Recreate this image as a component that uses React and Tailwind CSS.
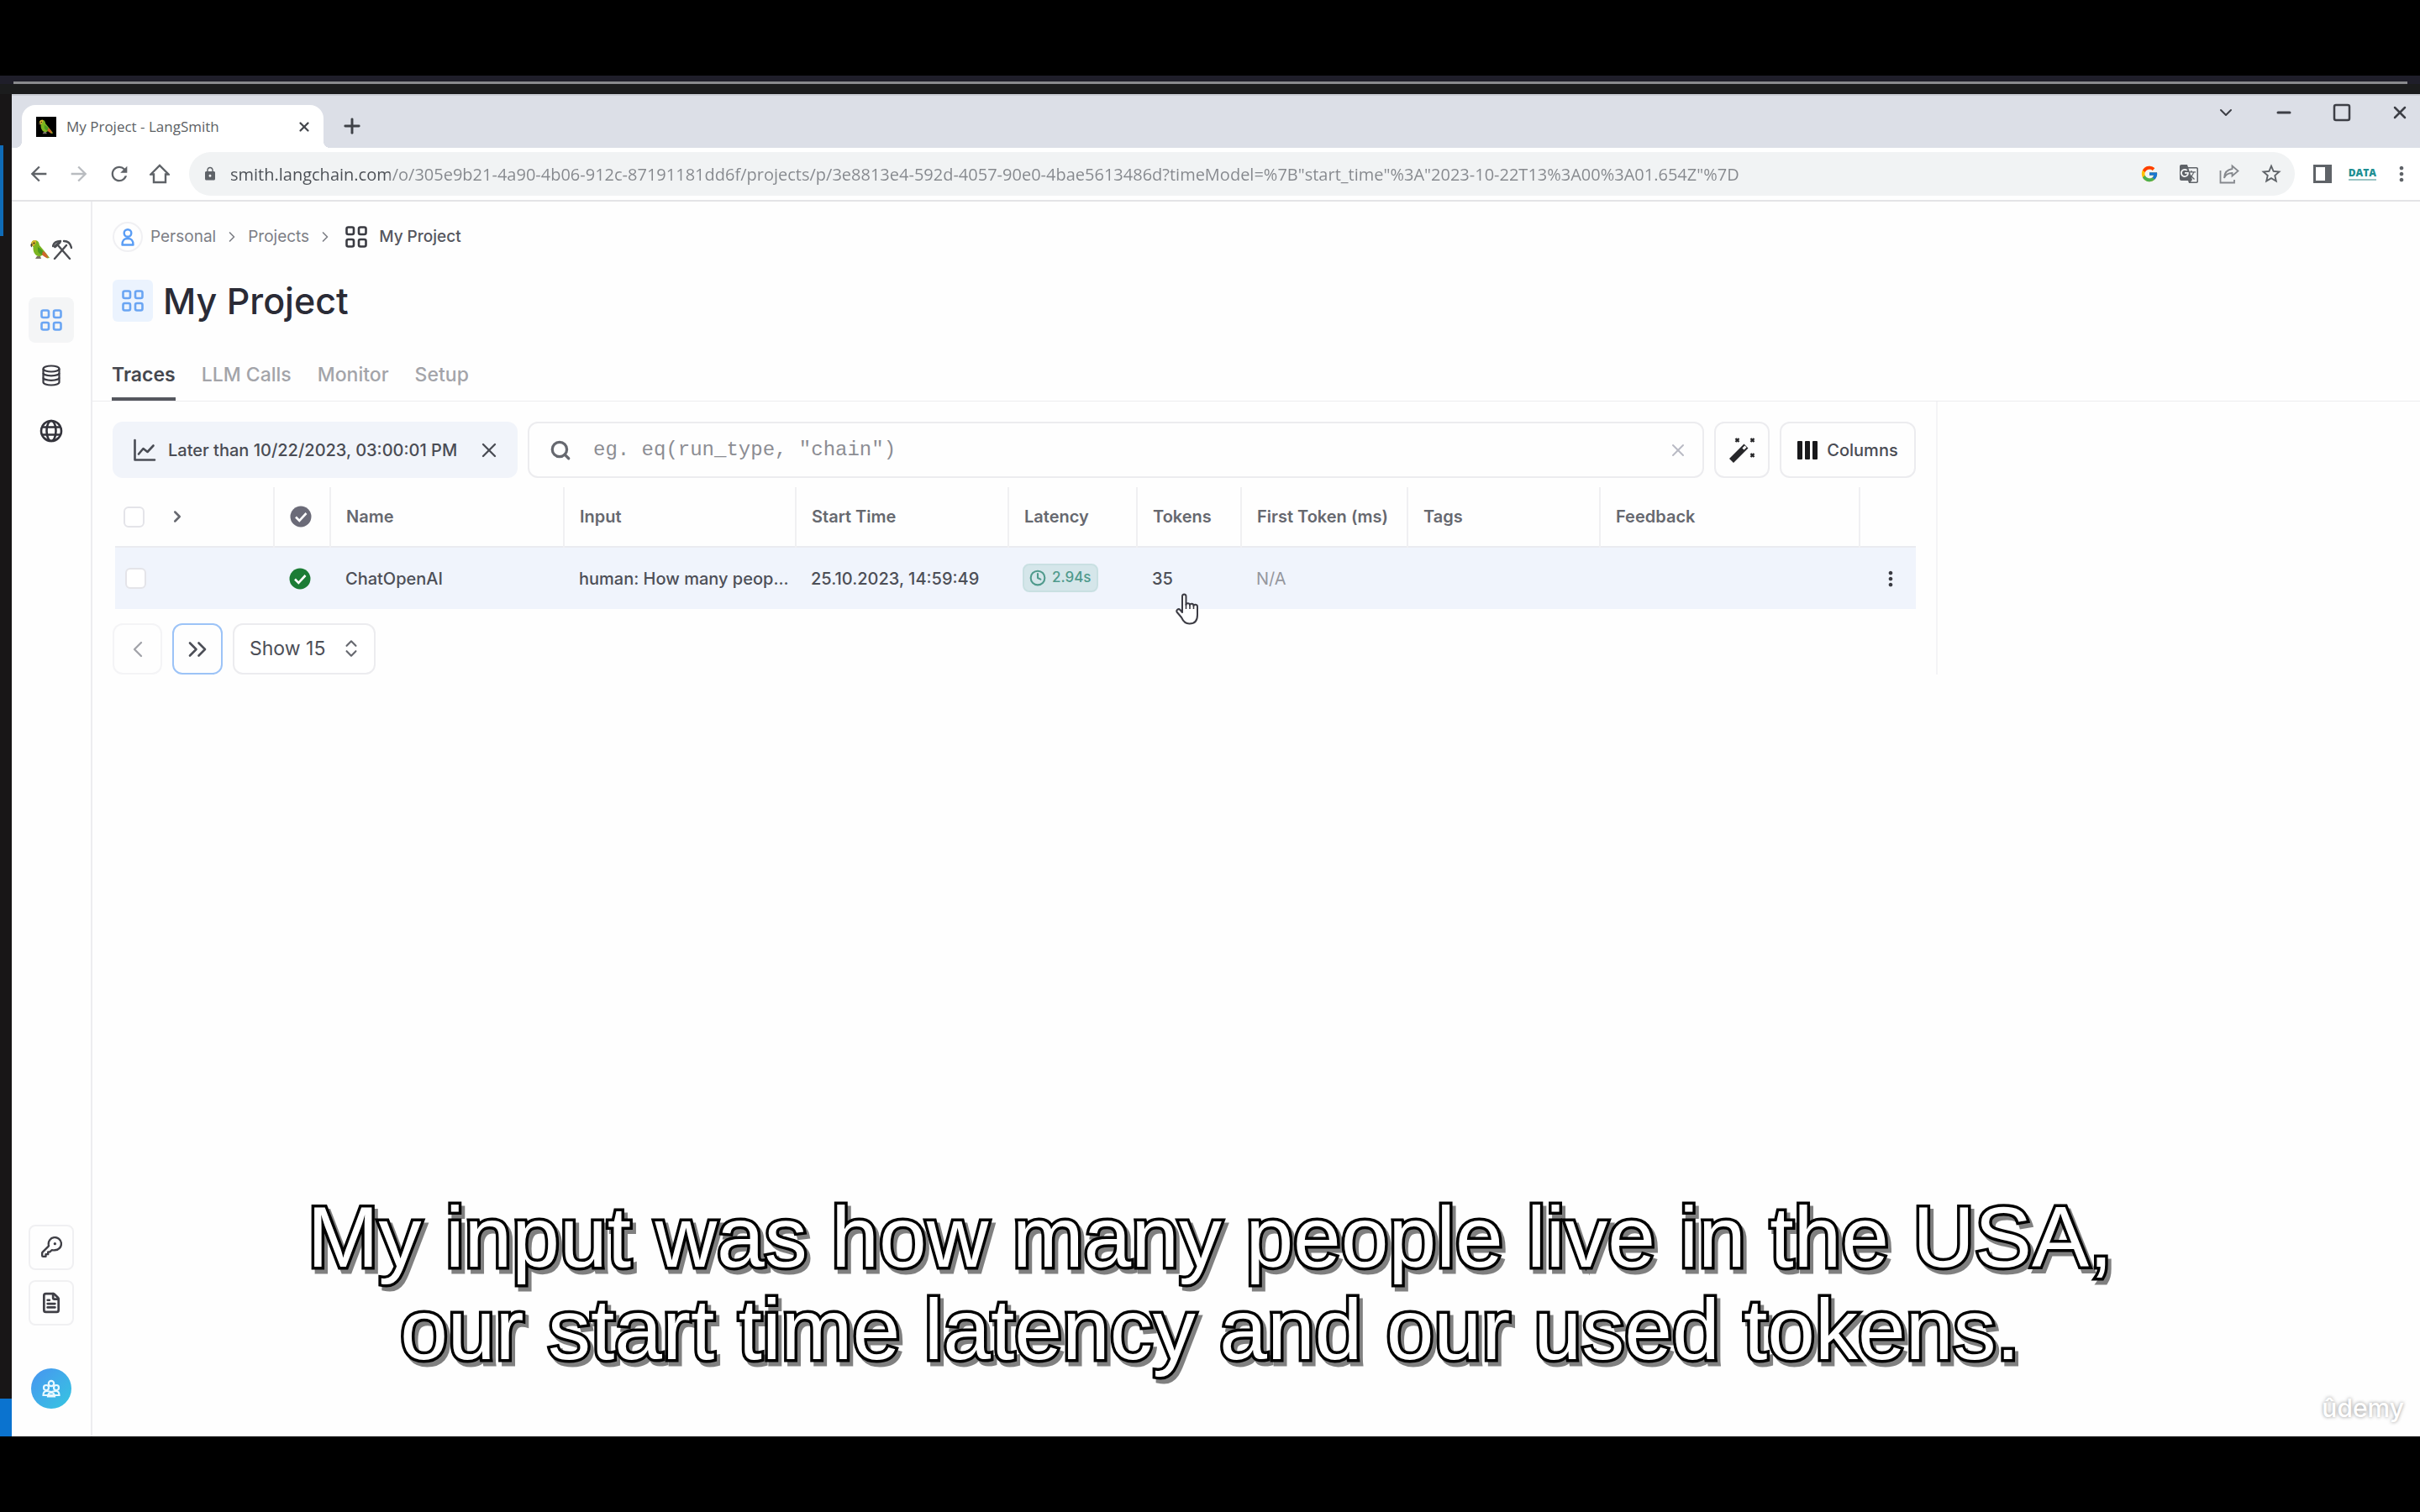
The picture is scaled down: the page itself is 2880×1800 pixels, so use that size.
import { ChevronDown, ChevronLeft, ChevronRight, ChevronsRight, ChevronsUpDown, Clock, FileText, Minus, Plus, Search, Square, X } from "lucide-react";
import { MdArrowBack, MdArrowForward, MdGTranslate, MdLock, MdMoreVert, MdRefresh, MdStarBorder } from "react-icons/md";
import { FcGoogle } from "react-icons/fc";

const URL_TEXT =
  'smith.langchain.com/o/305e9b21-4a90-4b06-912c-87191181dd6f/projects/p/3e8813e4-592d-4057-90e0-4bae5613486d?timeModel=%7B"start_time"%3A"2023-10-22T13%3A00%3A01.654Z"%7D';

/* ---------- drawings ---------- */

function Parrot({ className }) {
  return (
    <svg viewBox="0 0 24 24" className={className} aria-hidden="true">
      <path d="M1 6C1 2.5 3.500.5 6.500 1S10.500 4 11 7l5 6 4 5 3 4-3 .5-5-4-4 2C6 20 3 15 3.500 9z" fill="#7cb51f" />
      <path d="M1 6C1 2.500 3.500.5 6.500 1 8 3 6 7 3.500 8 2 8 1 7.500 1 6z" fill="#d9b32c" />
      <path d="M1 5c-1 1.500-.5 3.500.5 4.500C2.500 8 2.500 6.500 2.500 5z" fill="#4a4038" />
      <circle cx="4.500" cy="4.500" r="1" fill="#26301a" />
      <path d="M9 9c4 2 7 5 9 10-4 0-8-2-9-5z" fill="#4c9a1f" />
      <path d="M15 14c3 1 5 4 6.500 8-3 0-6-2-7.500-4z" fill="#d0652c" />
      <path d="M8 20l-2 3h7l-1-3z" fill="#7b7468" />
    </svg>
  );
}

function HammerPick({ className }) {
  return (
    <svg viewBox="0 0 24 24" className={className} fill="none" stroke="#4b4d52" strokeLinecap="round" aria-hidden="true">
      <path d="M7 7l14 16M17 7L3 23" strokeWidth="2.400" />
      <path d="M1 8c1-4 4-6 9-6" strokeWidth="2.400" />
      <path d="M3.500 8.500L9 3.500" strokeWidth="3.400" />
      <path d="M14 2c5 0 8 3 9 8" strokeWidth="2.400" />
    </svg>
  );
}

function Tiles({ className }) {
  return (
    <svg viewBox="0 0 26 26" className={className} fill="none" stroke="currentColor" strokeWidth="2.600" aria-hidden="true">
      <rect x="1.500" y="1.500" width="8.500" height="8.500" rx="2" />
      <rect x="16" y="1.500" width="8.500" height="8.500" rx="2" />
      <rect x="1.500" y="16" width="8.500" height="8.500" rx="2" />
      <rect x="16" y="16" width="8.500" height="8.500" rx="2" />
    </svg>
  );
}

function Home({ className }) {
  return (
    <svg viewBox="0 0 24 24" className={className} fill="none" stroke="currentColor" strokeWidth="2.400" aria-hidden="true">
      <path d="M1.500 12.500L12 2l10.500 10.500H19V22H5v-9.500z" />
    </svg>
  );
}

function Share({ className }) {
  return (
    <svg viewBox="0 0 24 24" className={className} fill="none" stroke="currentColor" strokeWidth="1.800" aria-hidden="true">
      <path d="M1.500 8v14.500H18V19" />
      <path d="M15.500 2.500L22.500 8.500 15.500 14.500V11C10.500 11 7.500 13 6 17c0-6 3.500-10 9.500-11z" />
    </svg>
  );
}

function SidePanel({ className }) {
  return (
    <svg viewBox="0 0 22 22" className={className} aria-hidden="true">
      <rect x="1.500" y="1.500" width="19" height="19" fill="#fff" stroke="#5f6368" strokeWidth="3" />
      <rect x="14" y="1" width="7" height="20" fill="#5f6368" />
    </svg>
  );
}

function Database({ className }) {
  return (
    <svg viewBox="0 0 24 26" className={className} fill="none" stroke="#3a3a42" strokeWidth="2.200" aria-hidden="true">
      <ellipse cx="12" cy="5" rx="9.500" ry="3.500" />
      <path d="M2.500 5v16c0 2 4.300 3.500 9.500 3.500s9.500-1.500 9.500-3.500V5" />
      <path d="M2.500 10c0 2 4.300 3.300 9.500 3.300s9.500-1.300 9.500-3.300M2.500 15.500c0 2 4.300 3.300 9.500 3.300s9.500-1.300 9.500-3.300" />
    </svg>
  );
}

function Globe({ className }) {
  return (
    <svg viewBox="0 0 28 28" className={className} fill="none" stroke="#33333b" strokeWidth="2.600" aria-hidden="true">
      <circle cx="14" cy="14" r="12" />
      <ellipse cx="14" cy="14" rx="5.500" ry="12" />
      <path d="M3.500 9.500h21M3.500 18.500h21" />
    </svg>
  );
}

function Key({ className }) {
  return (
    <svg viewBox="0 0 24 24" className={className} fill="none" stroke="#3f3f46" strokeWidth="2.200" strokeLinecap="round" strokeLinejoin="round" aria-hidden="true">
      <path d="M16 8h.01" strokeWidth="3" />
      <path d="M16 15a7 7 0 1 0-6.900-5.800c.1.500.1.700.1.900 0 .2-.1.300-.2.500-.1.200-.2.300-.5.600l-5.800 5.800c-.3.300-.5.500-.6.700-.1.200-.1.400-.1.700V21c0 .6.400 1 1 1h3v-2.500h2.500V17h2l1.300-1.300c.3-.3.400-.4.600-.5.200-.1.300-.2.500-.2.200 0 .4 0 .9.100.700.1 1.500-.1 2.200-.1z" />
    </svg>
  );
}

function Team({ className }) {
  return (
    <svg viewBox="0 0 24 24" className={className} fill="none" stroke="#e8f8ff" strokeWidth="2.200" aria-hidden="true">
      <circle cx="12" cy="6" r="3.200" />
      <circle cx="6" cy="11" r="3" />
      <circle cx="18" cy="11" r="3" />
      <path d="M2.500 20c0-3 1.500-5 4-5s5 1 5.500 1 3-1 5.500-1 4 2 4 5z" />
      <path d="M8 21.500c0-3 1.500-4.500 4-4.500s4 1.500 4 4.500z" />
    </svg>
  );
}

function Person({ className }) {
  return (
    <svg viewBox="0 0 20 24" className={className} fill="none" stroke="#5a9df5" strokeWidth="2.400" aria-hidden="true">
      <circle cx="10" cy="7.500" r="4.300" />
      <path d="M3.500 21.500c0-5.500 2-7.500 6.500-7.500s6.500 2 6.500 7.500z" strokeLinejoin="round" />
    </svg>
  );
}

function ChartLine({ className }) {
  return (
    <svg viewBox="0 0 28 28" className={className} fill="none" stroke="#4a4d55" strokeWidth="2.600" strokeLinecap="round" strokeLinejoin="round" aria-hidden="true">
      <path d="M2.500 2v23.500H26" />
      <path d="M7 18.500l5.500-6.500 5 4L24.500 8.500" />
    </svg>
  );
}

function Wand({ className }) {
  return (
    <svg viewBox="0 0 32 32" className={className} fill="none" stroke="#27272a" aria-hidden="true">
      <path d="M3.500 28.500L21 11" strokeWidth="7" />
      <path d="M17.500 14.500l3-3" stroke="#fff" strokeWidth="3" />
      <path d="M8.500 2l4 4M12.500 2l-4 4M26.500 2l4 4M30.500 2l-4 4M26.500 20l4 4M30.500 20l-4 4" strokeWidth="2.400" />
    </svg>
  );
}

function Bars({ className }) {
  return (
    <svg viewBox="0 0 24 22" className={className} fill="#18181b" aria-hidden="true">
      <rect x="0" y="0" width="6" height="22" rx="1" />
      <rect x="9" y="0" width="6" height="22" rx="1" />
      <rect x="18" y="0" width="6" height="22" rx="1" />
    </svg>
  );
}

function StatusDot({ className, label }) {
  return (
    <svg viewBox="0 0 26 26" className={className} role="img" aria-label={label}>
      <circle cx="13" cy="13" r="12.500" fill="currentColor" />
      <path d="M7 13.500l4.300 4.300L19.500 9" fill="none" stroke="#fff" strokeWidth="2.600" />
    </svg>
  );
}

function HandCursor({ className }) {
  return (
    <svg viewBox="0 0 28 38" className={className} fill="#fff" stroke="#3c3c44" strokeWidth="2" strokeLinejoin="round" aria-hidden="true">
      <path d="M8 23V4c0-3.500 4.500-3.500 4.500 0v10c0-2.500 4.500-2.500 4.500.5 0-2.500 4.500-2.500 4.500.8 0-2.300 4.500-2 4.500 1V26c0 7-3.500 10.500-9.500 10.500-5 0-7.500-3-9.500-7.500L1.500 22.500C.5 20 3.500 18 5.500 20z" />
      <path d="M12.500 13v6M17 14v5M21.500 15v4" fill="none" strokeWidth="1.600" />
    </svg>
  );
}

/* ---------- browser ---------- */

function TabStrip() {
  return (
    <div className="flex h-16 items-start justify-between border-t-2 border-[#c9ccd4] bg-[#dcdfe7]">
      <div className="flex h-full items-end">
        <div className="relative ml-3 flex h-[51px] w-[359px] items-center rounded-t-2xl bg-white pr-[14px] pl-[17px]">
          <span className="absolute bottom-0 -left-2 size-2 bg-[radial-gradient(circle_at_0_0,#dcdfe7_8px,#fff_8px)]" />
          <span className="absolute -right-2 bottom-0 size-2 bg-[radial-gradient(circle_at_100%_0,#dcdfe7_8px,#fff_8px)]" />
          <span className="flex size-6 items-center justify-center bg-black">
            <Parrot className="size-[18px]" />
          </span>
          <span className="ml-3 flex-1 font-['Open_Sans',sans-serif] text-[17px] text-[#5c5f64]">My Project - LangSmith</span>
          <button type="button" aria-label="Close tab" className="text-[#45484d]">
            <X className="size-[18px]" strokeWidth={3} />
          </button>
        </div>
        <button type="button" aria-label="New tab" className="mb-3 ml-5 text-[#3f4248]">
          <Plus className="size-7" strokeWidth={2.5} />
        </button>
      </div>
      <div className="mr-3 flex items-center gap-[45px] pt-2 text-[#3d3f46]">
        <button type="button" aria-label="Search tabs"><ChevronDown className="size-6" strokeWidth={2} /></button>
        <button type="button" aria-label="Minimize"><Minus className="size-6" strokeWidth={3} /></button>
        <button type="button" aria-label="Maximize"><Square className="size-6" strokeWidth={2.5} /></button>
        <button type="button" aria-label="Close"><X className="size-6" strokeWidth={2.5} /></button>
      </div>
    </div>
  );
}

function Toolbar() {
  return (
    <div className="flex h-16 items-center border-b-2 border-[#e4e4e6] bg-white pr-2 pl-[18px] text-[#5f6368]">
      <div className="flex items-center gap-5">
        <button type="button" aria-label="Back"><MdArrowBack className="size-7" /></button>
        <button type="button" aria-label="Forward" className="text-[#b9bcc0]"><MdArrowForward className="size-7" /></button>
        <button type="button" aria-label="Reload"><MdRefresh className="size-7" /></button>
        <button type="button" aria-label="Home" className="pl-[2px]"><Home className="size-6" /></button>
      </div>
      <div className="ml-[23px] flex h-[52px] flex-1 items-center rounded-full bg-[#f1f3f4] pr-[14px] pl-4">
        <MdLock className="size-[18px]" />
        <input
          aria-label="Address"
          defaultValue={URL_TEXT}
          className="ml-[15px] h-8 flex-1 bg-[linear-gradient(to_right,#4a4e54_190px,#85888d_190px)] bg-clip-text font-['Open_Sans',sans-serif] text-[20px] text-transparent outline-none"
        />
        <div className="flex items-center gap-6">
          <FcGoogle className="size-[22px]" />
          <button type="button" aria-label="Translate"><MdGTranslate className="size-6" /></button>
          <button type="button" aria-label="Share" className="text-[#85888d]"><Share className="size-6" /></button>
          <button type="button" aria-label="Bookmark"><MdStarBorder className="size-7" /></button>
        </div>
      </div>
      <div className="ml-[18px] flex items-center gap-4">
        <button type="button" aria-label="Side panel" className="px-1"><SidePanel className="size-[22px]" /></button>
        <button type="button" className="border-b-2 border-[#9cc4c4] font-['Open_Sans',sans-serif] text-[12px] leading-[14px] font-extrabold text-[#1f8f93]">DATA</button>
        <button type="button" aria-label="Menu"><MdMoreVert className="size-7" /></button>
      </div>
    </div>
  );
}

/* ---------- application ---------- */

function Sidebar() {
  return (
    <aside className="flex w-24 shrink-0 flex-col items-center border-r-2 border-[#ededf0] pt-[45px] pb-[33px]">
      <a href="#home" aria-label="LangSmith" className="mb-[45px] flex gap-[2px]">
        <Parrot className="size-6" />
        <HammerPick className="size-6" />
      </a>
      <nav className="flex flex-col gap-3">
        <a href="#projects" aria-label="Projects" className="flex size-[54px] items-center justify-center rounded-lg bg-[#f4f5f6]">
          <Tiles className="size-[26px] text-[#6aa5f3]" />
        </a>
        <a href="#datasets" aria-label="Datasets" className="flex size-[54px] items-center justify-center">
          <Database className="h-[26px] w-6" />
        </a>
        <a href="#hub" aria-label="Hub" className="flex size-[54px] items-center justify-center">
          <Globe className="size-7" />
        </a>
      </nav>
      <div className="mt-auto flex flex-col gap-3">
        <button type="button" aria-label="API keys" className="flex size-[54px] items-center justify-center rounded-lg border-2 border-[#f0f0f2]">
          <Key className="size-[26px]" />
        </button>
        <button type="button" aria-label="Documentation" className="flex size-[54px] items-center justify-center rounded-lg border-2 border-[#f0f0f2]">
          <FileText className="size-[26px] text-[#3f3f46]" strokeWidth={2.5} />
        </button>
      </div>
      <button type="button" aria-label="Account" className="mt-[51px] flex size-12 items-center justify-center rounded-full bg-gradient-to-br from-[#4794f0] to-[#35c6e0]">
        <Team className="size-6" />
      </button>
    </aside>
  );
}

function Breadcrumb() {
  return (
    <nav aria-label="Breadcrumb" className="flex h-9 items-center text-[19px] text-[#7d7f86]">
      <span className="flex size-9 items-center justify-center rounded-full border-2 border-[#f0f0f3]">
        <Person className="h-6 w-5" />
      </span>
      <a href="#personal" className="ml-[9px]">Personal</a>
      <ChevronRight className="mx-[9px] size-5" strokeWidth={2} />
      <a href="#projects">Projects</a>
      <ChevronRight className="mr-[14px] ml-[9px] size-5" strokeWidth={2} />
      <Tiles className="size-[26px] text-[#3a3b42]" />
      <span className="ml-[14px] font-medium text-[#55575e]">My Project</span>
    </nav>
  );
}

const TABS = ["Traces", "LLM Calls", "Monitor", "Setup"];

function PageTabs() {
  return (
    <div role="tablist" className="mt-9 flex gap-[31px] border-b border-[#ececef] pl-[23px] text-[23px] font-medium">
      {TABS.map((tab, i) => (
        <button
          key={tab}
          type="button"
          role="tab"
          aria-selected={i === 0}
          className={
            i === 0
              ? "h-[57px] border-b-4 border-[#55575e] font-semibold text-[#45474e]"
              : "h-[57px] border-b-4 border-transparent text-[#a3a4a9]"
          }
        >
          {tab}
        </button>
      ))}
    </div>
  );
}

function Filters() {
  return (
    <div className="flex h-[67px] gap-3">
      <div className="flex w-[482px] items-center rounded-xl bg-[#f1f4fa] pr-[20px] pl-6 text-[20px] font-medium text-[#4a4c54]">
        <ChartLine className="size-7" />
        <span className="ml-[14px] flex-1 whitespace-nowrap">Later than 10/22/2023, 03:00:01 PM</span>
        <button type="button" aria-label="Remove time filter"><X className="size-7" strokeWidth={2} /></button>
      </div>
      <div className="flex flex-1 items-center rounded-xl border-2 border-[#ececef] pr-[17px] pl-6">
        <Search className="size-[26px] text-[#66686f]" strokeWidth={3} />
        <input
          type="text"
          aria-label="Filter runs"
          placeholder={'eg. eq(run_type, "chain")'}
          className="ml-[26px] flex-1 font-['Liberation_Mono',monospace] text-[24px] outline-none placeholder:text-[#8c8d93]"
        />
        <button type="button" aria-label="Clear filter" className="text-[#b9bac4]"><X className="size-6" strokeWidth={2} /></button>
      </div>
      <button type="button" aria-label="Suggest filter" className="flex w-[66px] items-center justify-center rounded-xl border-2 border-[#ececef]">
        <Wand className="size-8" />
      </button>
      <button type="button" className="flex w-[162px] items-center justify-center gap-[11px] rounded-xl border-2 border-[#ececef] text-[20px] font-medium text-[#4a4c54]">
        <Bars className="h-[22px] w-6" />
        Columns
      </button>
    </div>
  );
}

function Tick({ label }) {
  return <input type="checkbox" aria-label={label} className="block size-[25px] appearance-none rounded-md border-2 border-[#e4e4e9] bg-white" />;
}

const HEADINGS = ["Name", "Input", "Start Time", "Latency", "Tokens", "First Token (ms)", "Tags", "Feedback"];

function RunsTable() {
  return (
    <table className="mt-[11px] ml-[3px] w-[calc(100%-3px)] table-fixed border-collapse text-left text-[20px] whitespace-nowrap">
      <colgroup>
        <col className="w-[189px]" />
        <col className="w-[67px]" />
        <col className="w-[278px]" />
        <col className="w-[276px]" />
        <col className="w-[253px]" />
        <col className="w-[153px]" />
        <col className="w-[124px]" />
        <col className="w-[198px]" />
        <col className="w-[229px]" />
        <col />
        <col className="w-[67px]" />
      </colgroup>
      <thead>
        <tr className="h-[71px] border-b-2 border-[#eaebf0] text-[#66686f]">
          <th className="border-r-2 border-[#f0f0f2] pl-[10px]">
            <div className="flex items-center gap-7">
              <Tick label="Select all runs" />
              <ChevronRight className="size-[22px]" strokeWidth={2.75} />
            </div>
          </th>
          <th className="border-r-2 border-[#f0f0f2] pl-[18px]">
            <StatusDot label="Status" className="size-[26px] text-[#6b6b78]" />
          </th>
          {HEADINGS.map((h) => (
            <th key={h} className="border-r-2 border-[#f0f0f2] pl-[18px] font-semibold">{h}</th>
          ))}
          <th />
        </tr>
      </thead>
      <tbody>
        <tr className="h-[74px] bg-[#f0f4fc] font-medium text-[#4d4f57]">
          <td className="pl-3"><Tick label="Select ChatOpenAI" /></td>
          <td className="pl-[18px]"><StatusDot label="Success" className="size-[26px] text-[#1c7c35]" /></td>
          <td className="pl-[18px]">ChatOpenAI</td>
          <td className="pl-[18px]">human: How many peop...</td>
          <td className="pl-[18px]">25.10.2023, 14:59:49</td>
          <td className="pl-[17px]">
            <span className="inline-flex h-[34px] items-center gap-[7px] rounded-lg border-2 border-[#c9e0e2] bg-[#d5e6ea] px-[6px] text-[17px] text-[#4f9a8c]">
              <Clock className="size-5" strokeWidth={2.5} />
              2.94s
            </span>
          </td>
          <td className="relative pl-[18px]">
            35
            <HandCursor className="absolute top-[54px] left-[46px] h-[38px] w-7" />
          </td>
          <td className="pl-[18px] font-normal text-[#95979e]">N/A</td>
          <td />
          <td />
          <td className="pl-[23px]">
            <button type="button" aria-label="Run actions" className="block text-[#3a3b42]"><MdMoreVert className="size-7" /></button>
          </td>
        </tr>
      </tbody>
    </table>
  );
}

function Pagination() {
  return (
    <div className="mt-[17px] flex h-[61px] gap-3 text-[#4d4f57]">
      <button type="button" aria-label="Previous page" disabled className="flex w-[59px] items-center justify-center rounded-xl border-2 border-[#f4f4f6] text-[#a2a3a9]">
        <ChevronLeft className="size-8" strokeWidth={1.75} />
      </button>
      <button type="button" aria-label="Next page" className="flex w-[60px] items-center justify-center rounded-xl border-2 border-[#9cc3f7]">
        <ChevronsRight className="size-9" strokeWidth={1.75} />
      </button>
      <div className="relative">
        <select aria-label="Rows per page" className="h-full w-[170px] appearance-none rounded-xl border-2 border-[#ececef] bg-white pl-[18px] text-[23px]">
          <option>Show 15</option>
        </select>
        <ChevronsUpDown className="pointer-events-none absolute top-[17px] right-4 size-[26px] text-[#66686f]" strokeWidth={2} />
      </div>
    </div>
  );
}

function Project() {
  return (
    <main className="flex min-w-0 flex-1 flex-col pt-6">
      <header className="pl-6">
        <Breadcrumb />
        <div className="mt-[33px] mb-px flex h-[50px] items-center gap-3">
          <span className="flex h-[50px] w-12 items-center justify-center rounded-md bg-[#ebf3fe]">
            <Tiles className="size-[26px] text-[#6aa5f3]" />
          </span>
          <h1 className="text-[43px] leading-[50px] font-medium text-[#2a2b36]">My Project</h1>
        </div>
      </header>
      <PageTabs />
      <div className="flex">
        <section className="min-w-0 flex-1 border-r-2 border-[#f4f4f6] pt-6 pr-6 pl-6">
          <Filters />
          <RunsTable />
          <Pagination />
        </section>
        <div className="w-[574px] shrink-0" />
      </div>
    </main>
  );
}

export default function App() {
  return (
    <div className="relative flex h-screen flex-col overflow-hidden bg-black py-[90px] font-['Inter',sans-serif]">
      <div className="h-[7px] bg-[#1f1e2a]" />
      <div className="bg-[#1f1e2a] pr-[15px] pl-4">
        <div className="h-[3px] bg-[#8a8a8e]" />
      </div>
      <div className="h-3 bg-[#1b1c1d]" />
      <div className="flex min-h-0 flex-1">
        <div className="flex w-[14px] shrink-0 flex-col bg-[#181617]">
          <div className="mt-[61px] h-[108px] w-1 bg-[#0f6cb8]" />
          <div className="mt-auto h-[45px] bg-[#0b73cf]" />
        </div>
        <div className="flex min-w-0 flex-1 flex-col bg-white">
          <TabStrip />
          <Toolbar />
          <div className="flex min-h-0 flex-1 bg-[#fefefe]">
            <Sidebar />
            <Project />
          </div>
        </div>
      </div>
      <p className="absolute inset-x-0 bottom-[162px] text-center font-['Liberation_Sans',sans-serif] text-[102px] leading-[110px] text-white [-webkit-text-stroke:7px_#000] [filter:drop-shadow(4px_5px_0_#808080)] [paint-order:stroke_fill]">
        My input was how many people live in the USA,
        <br />
        our start time latency and our used tokens.
      </p>
      <div className="absolute right-[19px] bottom-[102px] text-[30px] leading-[44px] font-medium text-white [text-shadow:0_0_4px_rgba(0,0,0,0.45)]">
        ûdemy
      </div>
    </div>
  );
}
